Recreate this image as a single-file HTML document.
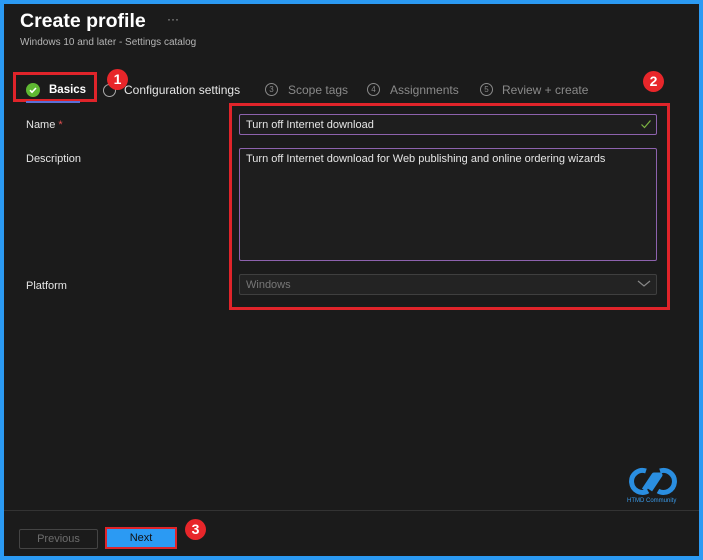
<!DOCTYPE html>
<html><head><style>
*{margin:0;padding:0;box-sizing:border-box}
body{width:703px;height:560px;background:#2b9af3;font-family:"Liberation Sans",sans-serif;overflow:hidden;position:relative}
#m{position:absolute;left:4px;top:4px;width:695px;height:552px;background:#1b1b1b}
.a{position:absolute}
.t{color:#e6e6e6;font-size:12px}
.g{color:#8a8a8a;font-size:12px}
.badge{position:absolute;width:21px;height:21px;border-radius:50%;background:#e8262a;color:#fff;font-weight:bold;font-size:14px;text-align:center;line-height:21px}
.num{position:absolute;width:13px;height:13px;border:1px solid #8a8a8a;border-radius:50%;color:#8a8a8a;font-size:8px;text-align:center;line-height:11px}
.inp{position:absolute;left:239px;width:418px;border:1px solid #8d62ad;border-radius:2px;background:#1e1e1e}
</style></head><body>
<div id="m"></div>
<div class="a" style="left:20px;top:10px;color:#fff;font-size:19.5px;font-weight:bold">Create profile</div>
<div class="a" style="left:167px;top:12px;color:#aaa;font-size:12px">···</div>
<div class="a" style="left:20px;top:37px;color:#b5b5b5;font-size:10px">Windows 10 and later - Settings catalog</div>

<div class="a" style="left:13px;top:72px;width:84px;height:30px;border:3px solid #e0242a"></div>
<div class="a" style="left:26px;top:83px;width:14px;height:14px;border-radius:50%;background:#5fb832"></div>
<svg class="a" style="left:26px;top:83px" width="14" height="14"><path d="M4 7.2l2 2 4-4.2" stroke="#fff" stroke-width="1.6" fill="none"/></svg>
<div class="a t" style="left:49px;top:84px;font-weight:bold;color:#fff;font-size:11.5px">Basics</div>
<div class="a" style="left:26px;top:101px;width:54px;height:2px;background:#5b6fd6"></div>
<div class="a" style="left:103px;top:84px;width:13px;height:13px;border:1px solid #aaa;border-radius:50%"></div>
<div class="badge" style="left:107px;top:69px">1</div>
<div class="a t" style="left:124px;top:83px;font-size:12px">Configuration settings</div>
<div class="num" style="left:265px;top:83px">3</div><div class="a g" style="left:288px;top:83px">Scope tags</div>
<div class="num" style="left:367px;top:83px">4</div><div class="a g" style="left:390px;top:83px">Assignments</div>
<div class="num" style="left:480px;top:83px">5</div><div class="a g" style="left:502px;top:83px">Review + create</div>
<div class="badge" style="left:643px;top:71px">2</div>

<div class="a" style="left:229px;top:103px;width:441px;height:207px;border:3px solid #e0242a"></div>
<div class="a t" style="left:26px;top:119px;font-size:11px">Name <span style="color:#e05050">*</span></div>
<div class="inp" style="top:114px;height:21px"></div>
<div class="a t" style="left:246px;top:119px;font-size:11px">Turn off Internet download</div>
<svg class="a" style="left:640px;top:118px" width="12" height="12"><path d="M1.5 6.5l3 3 6-7" stroke="#7cb342" stroke-width="1.2" fill="none"/></svg>
<div class="a t" style="left:26px;top:153px;font-size:11px">Description</div>
<div class="inp" style="top:148px;height:113px"></div>
<div class="a t" style="left:246px;top:153px;font-size:11px">Turn off Internet download for Web publishing and online ordering wizards</div>
<div class="a t" style="left:26px;top:280px;font-size:11px">Platform</div>
<div class="a" style="left:239px;top:274px;width:418px;height:21px;border:1px solid #3f3f3f;border-radius:2px;background:#232323"></div>
<div class="a" style="left:246px;top:279px;font-size:11px;color:#777">Windows</div>
<svg class="a" style="left:637px;top:279px" width="14" height="10"><path d="M1 2l6 5 6-5" stroke="#888" stroke-width="1.2" fill="none"/></svg>

<svg class="a" style="left:626px;top:463px" width="56" height="38"><path d="M20 8a11 11 0 1 0 2 20M34 8a11 11 0 1 1 -2 20M18 27l10-15h6l-10 15" stroke="#2a8ee0" stroke-width="5" fill="none" stroke-linejoin="round"/></svg>
<div class="a" style="left:627px;top:498px;font-size:6px;color:#3a9ae8">HTMD Community</div>

<div class="a" style="left:4px;top:510px;width:695px;height:1px;background:#333"></div>
<div class="a" style="left:19px;top:529px;width:79px;height:20px;border:1px solid #444;border-radius:2px;color:#6d6d6d;font-size:11px;text-align:center;line-height:18px">Previous</div>
<div class="a" style="left:105px;top:527px;width:72px;height:22px;border:2px solid #e0242a;background:#2b9af3;color:#111;font-size:11px;text-align:center;line-height:18px">Next</div>
<div class="badge" style="left:185px;top:519px">3</div>
</body></html>
